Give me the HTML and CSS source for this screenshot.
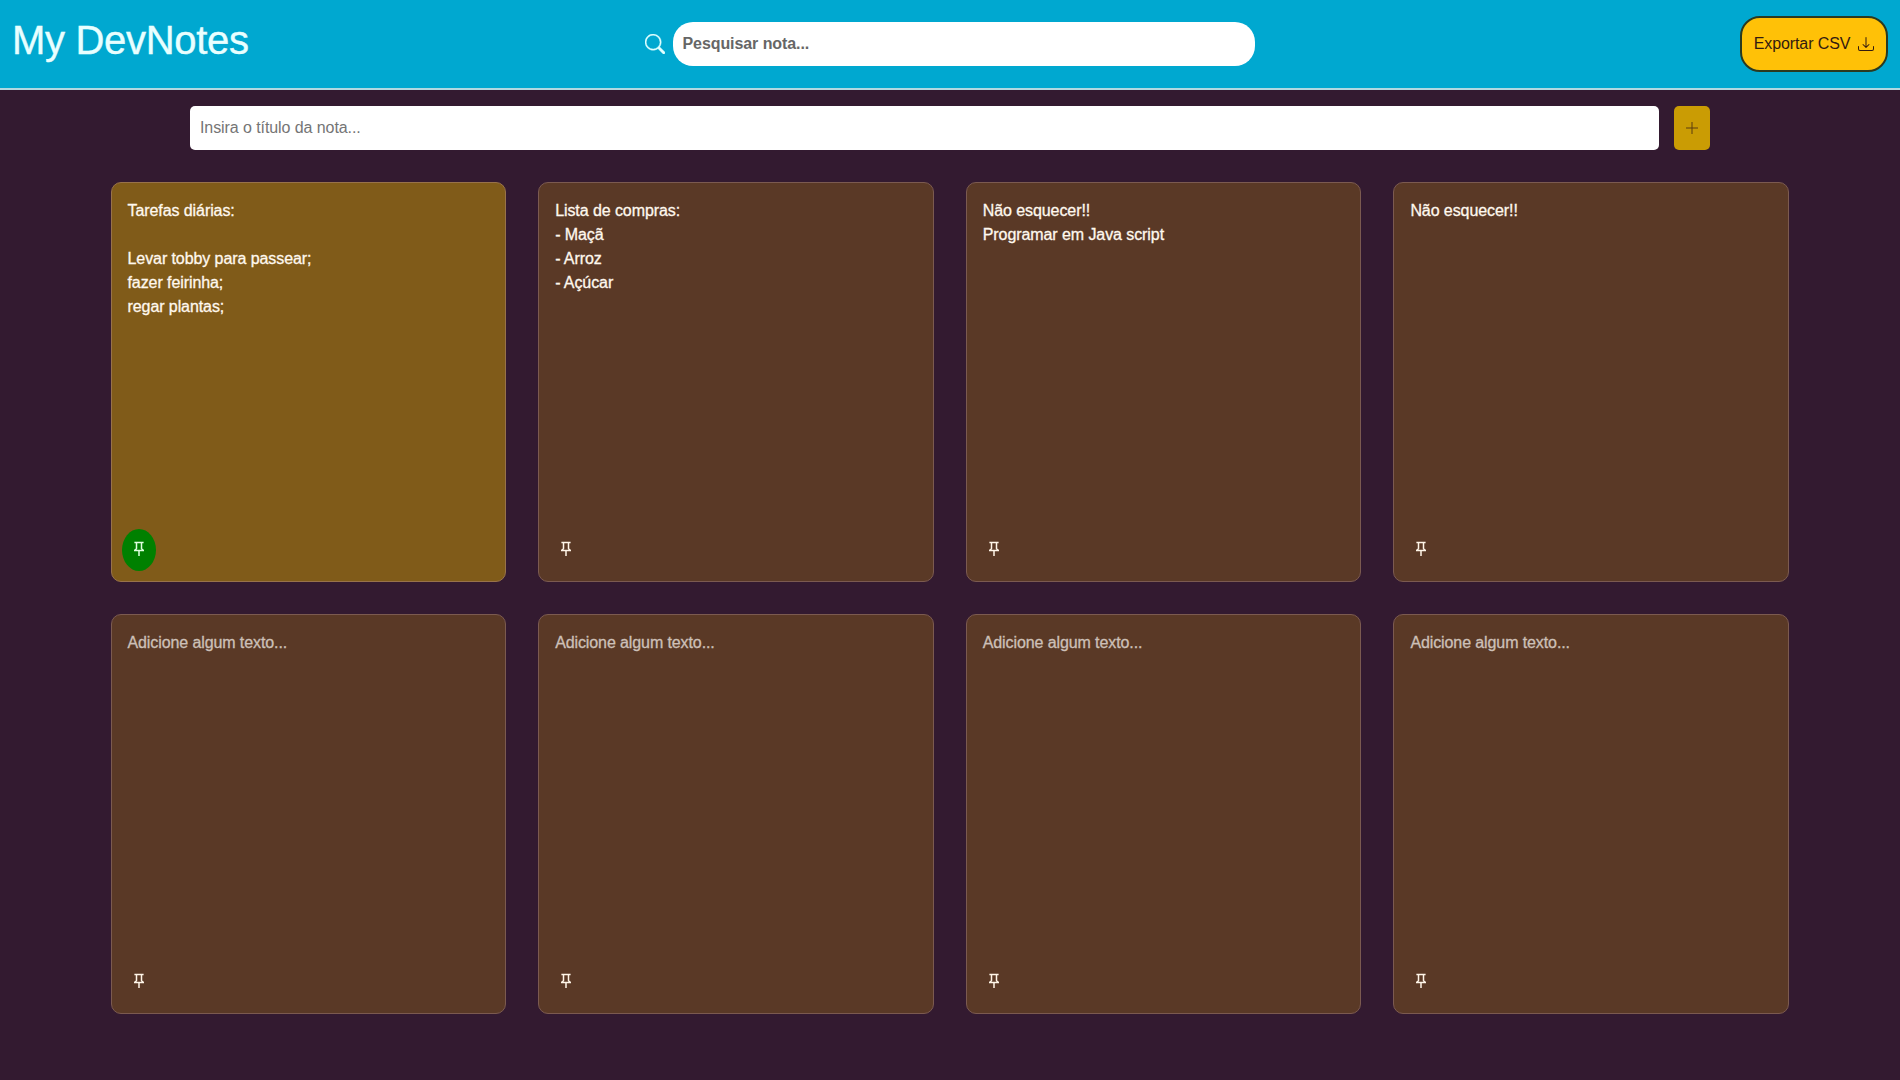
FILE: index.html
```html
<!DOCTYPE html>
<html lang="pt-br">
<head>
<meta charset="utf-8">
<title>My DevNotes</title>
<link rel="stylesheet" href="styles.css">
</head>
<body>
<svg class="sprite" xmlns="http://www.w3.org/2000/svg">
  <symbol id="pin" viewBox="0 0 16 16"><path d="M3.4 1.6h9.2M5.5 1.6v6.2M10.5 1.6v6.2M5.7 7.5L3.9 9M10.3 7.5L12.1 9M3 9.6h10M8 9.5v5.6" fill="none" stroke="currentColor" stroke-width="1.5"/></symbol>
</svg>
<header class="header">
  <h1 class="title">My DevNotes</h1>
  <div class="search">
    <svg class="search-icon" viewBox="0 0 16 16" fill="currentColor"><path d="M11.742 10.344a6.5 6.5 0 1 0-1.397 1.398h-.001c.03.04.062.078.098.115l3.85 3.85a1 1 0 0 0 1.415-1.414l-3.85-3.85a1.007 1.007 0 0 0-.115-.1zM12 6.5a5.5 5.5 0 1 1-11 0 5.5 5.5 0 0 1 11 0z"/></svg>
    <input class="search-input" type="text" placeholder="Pesquisar nota...">
  </div>
  <button class="export">Exportar CSV
    <svg class="icon" viewBox="0 0 16 16" fill="currentColor"><path d="M.5 9.9a.5.5 0 0 1 .5.5v2.5a1 1 0 0 0 1 1h12a1 1 0 0 0 1-1v-2.5a.5.5 0 0 1 1 0v2.5a2 2 0 0 1-2 2H2a2 2 0 0 1-2-2v-2.5a.5.5 0 0 1 .5-.5z"/><path d="M7.646 11.854a.5.5 0 0 0 .708 0l3-3a.5.5 0 0 0-.708-.708L8.5 10.293V1.5a.5.5 0 0 0-1 0v8.793L5.354 8.146a.5.5 0 1 0-.708.708l3 3z"/></svg>
  </button>
</header>
<main>
  <div class="add">
    <input class="add-input" type="text" placeholder="Insira o título da nota...">
    <button class="add-button" aria-label="Adicionar"><svg class="icon" viewBox="0 0 16 16"><path d="M8 2v12M2 8h12" stroke="currentColor" stroke-width="1"/></svg></button>
  </div>
  <section class="notes">
    <article class="note fixed"><p class="text">Tarefas diárias:

Levar tobby para passear;
fazer feirinha;
regar plantas;</p><span class="pin"><svg class="icon"><use href="#pin"/></svg></span></article>
    <article class="note"><p class="text">Lista de compras:
- Maçã
- Arroz
- Açúcar</p><span class="pin"><svg class="icon"><use href="#pin"/></svg></span></article>
    <article class="note"><p class="text">Não esquecer!!
Programar em Java script</p><span class="pin"><svg class="icon"><use href="#pin"/></svg></span></article>
    <article class="note"><p class="text">Não esquecer!!</p><span class="pin"><svg class="icon"><use href="#pin"/></svg></span></article>
    <article class="note"><p class="text empty">Adicione algum texto...</p><span class="pin"><svg class="icon"><use href="#pin"/></svg></span></article>
    <article class="note"><p class="text empty">Adicione algum texto...</p><span class="pin"><svg class="icon"><use href="#pin"/></svg></span></article>
    <article class="note"><p class="text empty">Adicione algum texto...</p><span class="pin"><svg class="icon"><use href="#pin"/></svg></span></article>
    <article class="note"><p class="text empty">Adicione algum texto...</p><span class="pin"><svg class="icon"><use href="#pin"/></svg></span></article>
  </section>
</main>
</body>
</html>
```
FILE: styles.css
```css
* { box-sizing: border-box; margin: 0; padding: 0; }
body { min-height: 100vh; background: #331a30; font: 16px/24px "Liberation Sans", Arial, sans-serif; color: #fff; }
input, button { font: inherit; border: 0; outline: 0; }
.sprite { display: none; }
.icon { width: 16px; height: 16px; display: block; }
.header { display: grid; grid-template-columns: 1fr 610px 1fr; align-items: center; height: 90px; padding: 0 12px 0 11px; background: #00a8d0; border-bottom: 2px solid #b0d8e0; }
.title { font-size: 40px; font-weight: 400; line-height: 48px; letter-spacing: -0.3px; color: #e8ffff; -webkit-text-stroke: 0.4px #e8ffff; padding: 0 0 8px 1px; }
.search { display: flex; align-items: center; gap: 8px; }
.search-icon { width: 20px; height: 20px; color: #e0ffff; stroke: currentColor; stroke-width: 0.3; flex: none; }
.search-input { flex: 1; min-width: 0; height: 44px; border-radius: 20px; padding: 0 10px; background: #fff; font-weight: 700; letter-spacing: -0.08px; }
.search-input::placeholder { color: #666; opacity: 1; }
.export { justify-self: end; display: flex; align-items: center; justify-content: center; gap: 8px; width: 148px; height: 56px; border: 2px solid #2b3a20; border-radius: 20px; background: #ffc107; color: #331a10; letter-spacing: -0.1px; }
.add { display: flex; gap: 15px; padding: 16px 190px 0; }
.add-input { flex: 1; height: 44px; border-radius: 5px; padding: 0 10px; background: #fff; letter-spacing: -0.08px; }
.add-input::placeholder { color: #757575; opacity: 1; }
.add-button { width: 36px; height: 44px; display: flex; align-items: center; justify-content: center; border-radius: 5px; background: #ca9c04; color: #5a3d10; }
.notes { display: grid; grid-template-columns: repeat(4, 1fr); gap: 32px; padding: 32px 111px 0 110.5px; }
.note { display: flex; flex-direction: column; justify-content: space-between; align-items: flex-start; height: 400px; padding: 16px 16px 10px 10px; border: 1px solid #7b5a50; border-radius: 10px; background: #5a3926; }
.note.fixed { background: #805b19; border-color: #98724a; }
.text { white-space: pre-line; padding-left: 6px; color: #fff8ee; letter-spacing: -0.08px; -webkit-text-stroke: 0.3px currentColor; }
.text.empty { color: #cdc0b8; letter-spacing: -0.1px; }
.pin { display: flex; align-items: center; justify-content: center; width: 34px; height: 42px; padding-bottom: 3px; border-radius: 50%; color: #fff5e8; }
.fixed .pin { background: #008000; color: #e0ffe0; }
```
